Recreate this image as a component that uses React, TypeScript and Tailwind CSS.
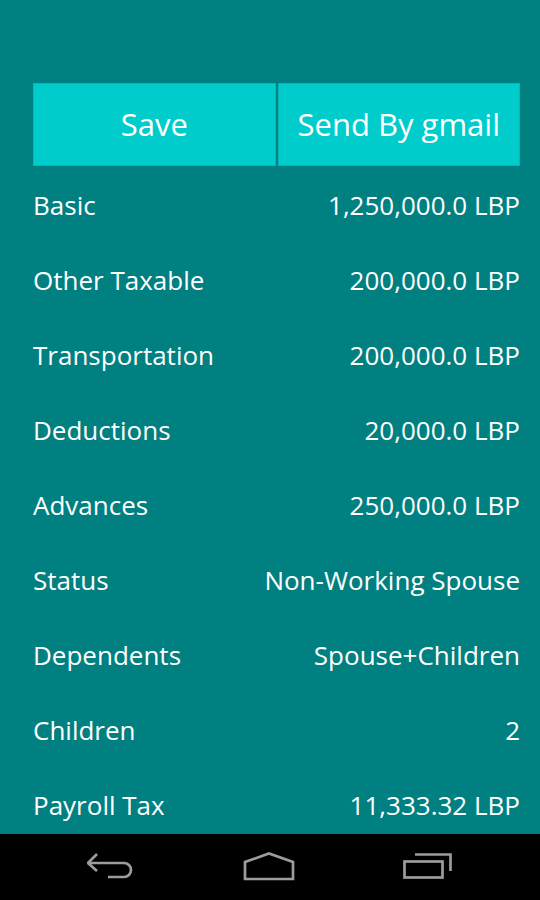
const rows: [string, string][] = [
  ['Basic', '1,250,000.0 LBP'],
  ['Other Taxable', '200,000.0 LBP'],
  ['Transportation', '200,000.0 LBP'],
  ['Deductions', '20,000.0 LBP'],
  ['Advances', '250,000.0 LBP'],
  ['Status', 'Non-Working Spouse'],
  ['Dependents', 'Spouse+Children'],
  ['Children', '2'],
  ['Payroll Tax', '11,333.32 LBP'],
];

const BackIcon = () => (
  <svg width="48" height="30" viewBox="0 0 48 30" fill="none" stroke="#9c9c9c" strokeWidth="2.7">
    <path d="M10 2 L1 11 L10 19" strokeLinejoin="miter" />
    <path d="M1 11 H37 A7 7 0 0 1 37 25 H21" />
  </svg>
);

const HomeIcon = () => (
  <svg width="52" height="30" viewBox="0 0 52 30" fill="none" stroke="#9c9c9c" strokeWidth="2.7">
    <path d="M2 27 V10 L26 1.5 L50 10 V27 Z" strokeLinejoin="miter" />
  </svg>
);

const RecentsIcon = () => (
  <svg width="50" height="30" viewBox="0 0 50 30" fill="none" stroke="#9c9c9c" strokeWidth="2.7">
    <rect x="1.5" y="9.5" width="38" height="16" />
    <path d="M12 2.5 H47.5 V19" />
  </svg>
);

export default function App() {
  return (
    <div className="flex h-[900px] w-[540px] flex-col bg-black font-['Open_Sans',sans-serif] text-white">
      <main className="h-[834px] overflow-hidden bg-[#008080] pl-[33px] pr-[20px] pt-[83px]">
        <div className="flex h-[83px] gap-[2px]">
          <button className="flex-1 border border-[#00b9b9] bg-[#00cccc] text-[31px] text-white">
            Save
          </button>
          <button className="flex-1 border border-[#00b9b9] bg-[#00cccc] text-[31px] text-white">
            Send By gmail
          </button>
        </div>
        {rows.map(([label, value]) => (
          <div
            key={label}
            className="flex h-[75px] items-center justify-between pt-[2px] text-[26px] leading-[34px]"
          >
            <span>{label}</span>
            <span>{value}</span>
          </div>
        ))}
      </main>
      <nav className="flex h-[66px] items-center justify-center gap-[108px]">
        <BackIcon />
        <HomeIcon />
        <RecentsIcon />
      </nav>
    </div>
  );
}
